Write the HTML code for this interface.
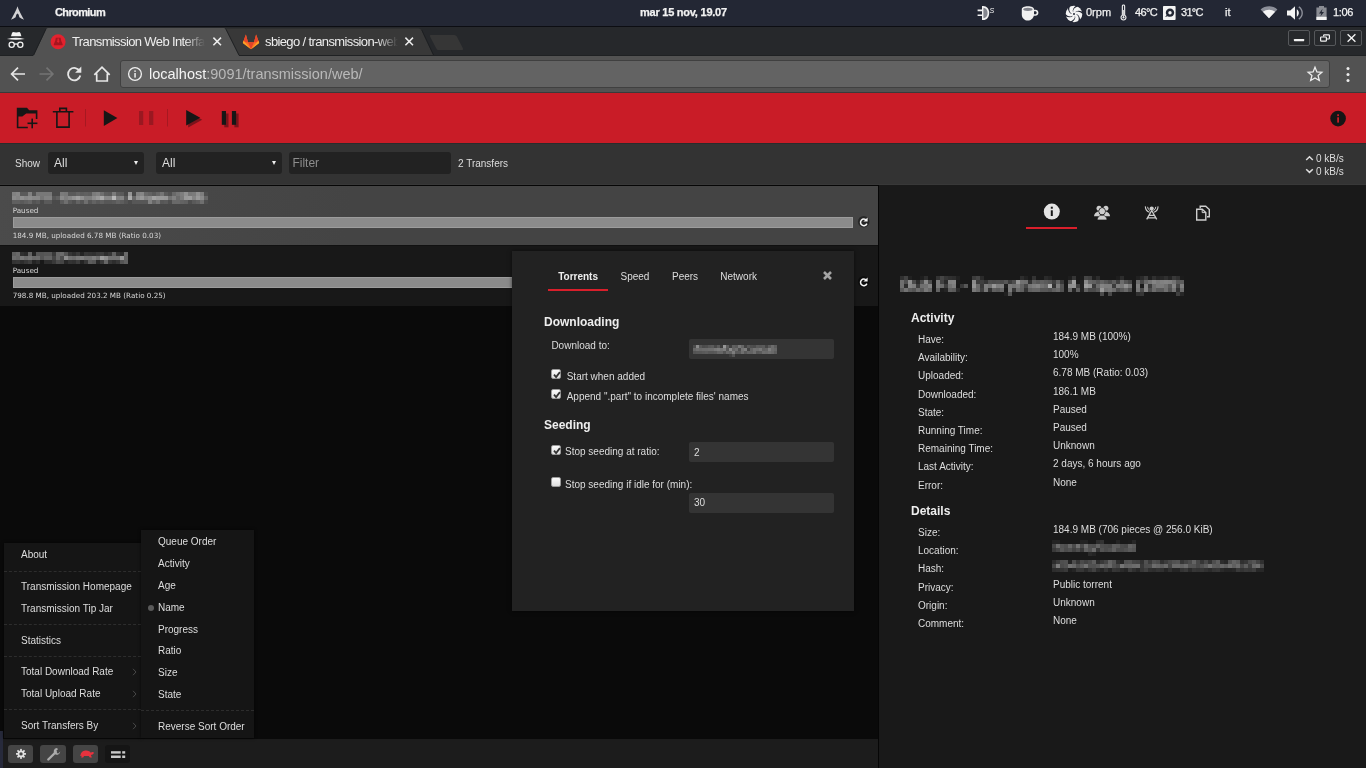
<!DOCTYPE html>
<html lang="it">
<head>
<meta charset="utf-8">
<title>Transmission Web Interface</title>
<style>
*{box-sizing:border-box;margin:0;padding:0}
html,body{width:1366px;height:768px;overflow:hidden;background:#0a0a0a}
body{position:relative;font-family:"Liberation Sans",Arial,sans-serif;font-size:10px;color:#ddd;line-height:1}
#wrap{position:absolute;left:0;top:0;width:1366px;height:768px;will-change:transform}
.abs{position:absolute}
svg{display:block;position:absolute;overflow:visible}
/* ---------- desktop panel ---------- */
#panel{position:absolute;left:0;top:0;width:1366px;height:27px;background:#232734;border-bottom:1px solid #0c0d12;color:#f2f2f2;font-size:11px}
#panel span{position:absolute;top:6px;white-space:pre;line-height:13px;-webkit-text-stroke:.25px #f2f2f2}
#panel .b{font-weight:bold}
/* ---------- chromium chrome ---------- */
#tabbar{position:absolute;left:0;top:27px;width:1366px;height:28px;background:#26282b}
#navbar{position:absolute;left:0;top:55px;width:1366px;height:38px;background:#525252;border-bottom:1px solid #3a3a3a}
.tabtitle{position:absolute;top:33.700px;font-size:13px;line-height:16px;color:#eee;white-space:pre;letter-spacing:-.62px;overflow:hidden}
#url{position:absolute;left:120px;top:60px;width:1210px;height:28px;background:#636363;border:1px solid #404040;border-radius:3px}
#urltext{position:absolute;left:149px;top:65px;font-size:14.5px;line-height:18px;color:#f4f4f4;white-space:pre}
#urltext i{font-style:normal;color:#b9b9b9}
.wbtn{position:absolute;top:30px;width:22px;height:16px;border:1px solid #56585b;border-radius:2px;background:#27292c}
.sel.noarr:after{display:none}
/* ---------- transmission ---------- */
#toolbar{position:absolute;left:0;top:93px;width:1366px;height:50px;background:#c91c27}
#statusbar{position:absolute;left:0;top:143px;width:1366px;height:42px;background:#333;box-shadow:inset 0 1px 0 #2b2b2b,inset 0 -1px 0 #383838}
#listtop{position:absolute;left:0;top:185px;width:879px;height:1px;background:#060606}
.sel{position:absolute;top:152px;height:22px;background:#222;border-radius:3px;color:#ddd;font-size:12px;line-height:22px;padding-left:6px}
.sel:after{content:"";position:absolute;right:6.200px;top:9px;border:2.400px solid transparent;border-top:4.600px solid #eee;border-bottom:0}
#list{position:absolute;left:0;top:186px;width:878px;height:552px;background:#0a0a0a}
.row{position:absolute;left:0;width:878px;height:60px}
.row .nm{position:absolute;left:13px;font-weight:bold;font-size:11px;line-height:12px;color:#ddd;white-space:pre}
.row .st{position:absolute;left:12.700px;font:7.2px/9px "DejaVu Sans",Verdana,sans-serif;color:#d8d8d8;white-space:pre}
.row .bar{position:absolute;left:13px;top:31px;width:840px;height:11px;background:#8b8b8b;border:1px solid #9c9c9c}
#inspector{position:absolute;left:878px;top:185px;width:488px;height:583px;background:#191919;border-left:1px solid #060606}
.ih{position:absolute;left:911px;font-weight:bold;font-size:12px;line-height:14px;color:#eee;white-space:pre}
.k,.v{position:absolute;font-size:10px;line-height:12px;color:#ddd;white-space:pre}
.k{left:918px}.v{left:1053px}
#footer{position:absolute;left:0;top:738px;width:878px;height:30px;background:#1c1c1c;border-top:1px solid #0a0a0a}
.fbtn{position:absolute;top:745px;width:25px;height:18px;border-radius:3px;background:#454545}
/* dialog */
#prefs{position:absolute;left:512px;top:251px;width:342px;height:360px;background:#222;box-shadow:0 0 4px rgba(0,0,0,.6)}
#prefs .t{position:absolute;font-size:10px;line-height:12px;color:#ddd;white-space:pre}
#prefs .h{position:absolute;left:32px;font-weight:bold;font-size:12px;line-height:14px;color:#eee}
#prefs .inp{position:absolute;left:177px;width:145px;height:20px;background:#343434;border-radius:2px;font-size:10px;line-height:20px;padding-left:5px;color:#ddd}
.cb{position:absolute;width:10px;height:10px;border-radius:2px;background:linear-gradient(#fbfbfb,#dedede);border:1px solid #9a9a9a}
/* menus */
.menu{position:absolute;background:#151515;box-shadow:0 0 3px rgba(0,0,0,.7)}
.menu .mi{position:absolute;font-size:10px;line-height:12px;color:#ddd;white-space:pre}
.menu .sep{position:absolute;left:0;right:0;height:0;border-top:1px dashed #2d2d2d}
</style>
</head>
<body>
<div id="wrap">
<!-- PANEL -->
<div id="panel">
<svg style="left:11px;top:6px" width="13" height="14" viewBox="0 0 13 14"><path d="M6.500 .2 C5.900 2.400 4.800 5 0 13.700 C2.200 12.700 3.600 12.200 4.700 11.300 C4.900 9.300 5.600 8.300 6.500 7.600 C7.400 8.300 8.100 9.300 8.300 11.300 C9.400 12.200 10.800 12.700 13 13.700 C8.200 5 7.100 2.400 6.500 .2Z" fill="#d2d2d4"/></svg>
<span class="b" style="left:55px;letter-spacing:-.62px">Chromium</span>
<span class="b" style="left:640px;letter-spacing:-.24px">mar 15 nov, 19.07</span>
<!-- plug -->
<svg style="left:977px;top:5px" width="18" height="16" viewBox="0 0 18 16"><path d="M.6 4.600h5v1.600h-5zM.6 9.500h5v1.600h-5z" fill="#f2f2f2"/><path d="M5 1h1.200c3.600 0 6 3 6 6.900s-2.400 7.100-6 7.100H5z" fill="#f2f2f2"/><path d="M6.400 2.700c2.500 .2 4.200 2.400 4.200 5.200s-1.700 5.200-4.200 5.400z" fill="#84868e"/><text x="12.600" y="8.300" font-size="7" font-style="italic" fill="#f2f2f2" font-family="Liberation Sans, sans-serif">S</text></svg>
<!-- cup -->
<svg style="left:1021px;top:6px" width="18" height="15" viewBox="0 0 18 15"><path d="M.8 3.200C.8 1.500 3.500 .3 6.900 .3s6.100 1.200 6.100 2.900v.5h1.500c1.700 0 2.900 1.300 2.900 3s-1.300 3-3 3h-1.600c-.5 2.600-2.900 4.800-5.900 4.800-3.400 0-6.100-2.700-6.100-6.100z M13 5.200v3h1.200c.9 0 1.500-.7 1.500-1.500s-.6-1.500-1.500-1.500z" fill="#f0f0f0" fill-rule="evenodd"/><ellipse cx="6.900" cy="3.300" rx="4.700" ry="1.600" fill="#232734" opacity=".55"/></svg>
<!-- fan -->
<svg style="left:1065px;top:4.500px" width="18" height="18" viewBox="-9 -9 18 18"><circle r="8.300" fill="#f4f4f4"/><g fill="#232734"><path d="M1.70 0.00 Q5.60 0.20 6.25 6.47 L4.23 7.95 Q5.96 1.71 1.70 0.00Z"/><path transform="rotate(60)" d="M1.70 0.00 Q5.60 0.20 6.25 6.47 L4.23 7.95 Q5.96 1.71 1.70 0.00Z"/><path transform="rotate(120)" d="M1.70 0.00 Q5.60 0.20 6.25 6.47 L4.23 7.95 Q5.96 1.71 1.70 0.00Z"/><path transform="rotate(180)" d="M1.70 0.00 Q5.60 0.20 6.25 6.47 L4.23 7.95 Q5.96 1.71 1.70 0.00Z"/><path transform="rotate(240)" d="M1.70 0.00 Q5.60 0.20 6.25 6.47 L4.23 7.95 Q5.96 1.71 1.70 0.00Z"/><path transform="rotate(300)" d="M1.70 0.00 Q5.60 0.20 6.25 6.47 L4.23 7.95 Q5.96 1.71 1.70 0.00Z"/></g><circle r="1" fill="#232734"/></svg>
<span style="left:1086px">0rpm</span>
<!-- thermo -->
<svg style="left:1120px;top:4px" width="7" height="17" viewBox="0 0 7 17"><path d="M3.500 .5c-1 0-1.700 .7-1.700 1.700v8.900c-.8 .5-1.300 1.400-1.300 2.400 0 1.700 1.300 3 3 3s3-1.300 3-3c0-1-.5-1.900-1.300-2.400V2.200c0-1-.7-1.700-1.700-1.700z M3.500 1.600c.4 0 .6 .3 .6 .6v9.500c.8 .3 1.300 1 1.300 1.800 0 1.100-.9 1.900-1.900 1.900s-1.900-.8-1.900-1.900c0-.8 .5-1.500 1.300-1.800V2.200c0-.3 .2-.6 .6-.6z" fill="#f0f0f0" fill-rule="evenodd"/><circle cx="3.500" cy="13.500" r="1.100" fill="#f0f0f0"/><rect x="3.100" y="6" width=".8" height="7" fill="#f0f0f0"/></svg>
<span style="left:1135px;letter-spacing:-.6px">46°C</span>
<!-- disk -->
<svg style="left:1163px;top:6px" width="13" height="14" viewBox="0 0 13 14"><path d="M1 0h10.600c.6 0 1 .4 1 1v12c0 .6-.4 1-1 1H1c-.6 0-1-.4-1-1V1c0-.6 .4-1 1-1z M7 2.600c-2.300 0-4.200 1.800-4.200 4.100 0 .9 .3 1.700 .8 2.400l-1.500 2 2.500-.9c.7 .4 1.500 .6 2.400 .6 2.300 0 4.200-1.800 4.200-4.100S9.300 2.600 7 2.600z" fill="#f4f4f4" fill-rule="evenodd"/><circle cx="7" cy="6.700" r="1.700" fill="#f4f4f4"/></svg>
<span style="left:1181px;letter-spacing:-.7px">31°C</span>
<span style="left:1225px">it</span>
<!-- wifi -->
<svg style="left:1260px;top:6px" width="18" height="13" viewBox="0 0 18 13"><path d="M9 12.300L.6 3.400C5.200 -.8 12.800 -.8 17.400 3.400z" fill="#8c8f99"/><path d="M9 12.300L2.900 5.800C6.300 2.900 11.700 2.900 15.100 5.800z" fill="#f4f4f4"/></svg>
<!-- volume -->
<svg style="left:1287px;top:6px" width="17" height="14" viewBox="0 0 17 14"><path d="M0 4.500h3.300L8 .3v13.400L3.300 9.500H0z" fill="#f4f4f4"/><path d="M9.800 3.300c1.300 .9 2 2.200 2 3.700s-.7 2.800-2 3.700z" fill="#f4f4f4"/><path d="M11.800 .9c2.100 1.400 3.400 3.600 3.400 6.100s-1.300 4.700-3.400 6.100" fill="none" stroke="#8c8f99" stroke-width="1.400"/></svg>
<!-- battery -->
<svg style="left:1316px;top:6px" width="11" height="14" viewBox="0 0 11 14"><path d="M3 0h5v1.400h2.600V14H.4V1.400H3z" fill="#8a8c93"/><rect x=".4" y="10.800" width="10.200" height="3.200" fill="#f4f4f4"/><path d="M6.600 2.800L3 7.400h2.300L4.400 10.600 8 6H5.700z" fill="#232734"/></svg>
<span style="left:1333px;letter-spacing:-.35px">1:06</span>
</div>
<!-- TABBAR -->
<div id="tabbar"></div>
<div id="navbar"></div><div class="abs" style="left:0;top:54.500px;width:33px;height:1px;background:#1f2123"></div><div class="abs" style="left:239px;top:54.500px;width:1127px;height:1px;background:#1f2123"></div>
<svg style="left:0;top:27px" width="480" height="29" viewBox="0 0 480 29">
<!-- inactive tab -->
<path d="M226 1.500 H418.500 Q420.500 1.500 421.500 3.500 L433 28 H214z" fill="#383838"/>
<!-- new tab button -->
<path d="M430.500 8 H454.500 Q456 8 456.800 9.500 L463 21.500 Q463.600 23 462 23 H438.500 Q437 23 436.300 21.500 L430 9.500 Q429.400 8 430.500 8z" fill="#363636"/>
<!-- active tab -->
<path d="M33.800 28.500 L46.200 2.200 Q46.800 1 48.200 1 H223.600 Q225 1 225.600 2.200 L238.800 28.500z" fill="#525252"/>
<path d="M33.400 28.500 L45.800 2.200 M226 2.200 L239.200 28.500 M421.800 3 L433.600 28" stroke="#1c1e20" stroke-width=".9" fill="none"/>
<!-- incognito -->
<g fill="#f2f2f2"><path d="M12 6 L12.900 4.900 L16.200 5.500 L19.500 4.900 L20.400 6 L21.400 9.300 H11z"/><path d="M6.900 11.900 Q16 9.700 24.800 11.900 Q16 13.400 6.900 11.900z"/></g>
<g fill="none" stroke="#f2f2f2" stroke-width="1.300"><circle cx="11.700" cy="17.800" r="2.600"/><circle cx="20.300" cy="17.800" r="2.600"/><path d="M14.300 17.500 Q16 16.300 17.700 17.500"/></g>
<!-- transmission favicon -->
<circle cx="58.100" cy="14.800" r="7.500" fill="#e3222e"/>
<path d="M55.800 10.800h4.800l.5 2.700 1.500 3.800c.2 .6-.1 1-.7 1h-7.400c-.6 0-.9-.4-.7-1l1.500-3.800z" fill="#a5151f"/>
<path d="M57.500 11.500h1.400v2.200h1l-1.700 2.200-1.700-2.200h1z" fill="#e3222e"/>
<!-- tab close x -->
<path d="M213.400 10.600 L221 18.200 M221 10.600 L213.400 18.200" stroke="#ececec" stroke-width="1.500" fill="none"/>
<path d="M405.400 10.600 L413 18.200 M413 10.600 L405.400 18.200" stroke="#ececec" stroke-width="1.500" fill="none"/>
<!-- gitlab fox -->
<path d="M251 22.300 L242.800 15.900 L245.900 7.600 L248 15.300 H254 L256.100 7.600 L259.200 15.900z" fill="#fc6d26"/>
<path d="M251 22.300 L248 15.300 H254z" fill="#e24329"/>
<path d="M244.300 11.800 L245.900 7.600 L248 15.300 H243.400z M257.700 11.800 L256.100 7.600 L254 15.300 H258.600z" fill="#e8452a"/>
<path d="M251 22.300 L242.800 15.900 L243.600 13.600z M251 22.300 L259.200 15.900 L258.400 13.600z" fill="#fca326"/>
</svg>
<div class="tabtitle" style="left:72px;width:133px;-webkit-mask-image:linear-gradient(90deg,#000 112px,transparent 133px);mask-image:linear-gradient(90deg,#000 112px,transparent 133px)">Transmission Web Interface</div>
<div class="tabtitle" style="left:265px;width:133px;-webkit-mask-image:linear-gradient(90deg,#000 112px,transparent 133px);mask-image:linear-gradient(90deg,#000 112px,transparent 133px)">sbiego / transmission-web</div>
<!-- window buttons -->
<div class="wbtn" style="left:1288px"></div><div class="wbtn" style="left:1314px"></div><div class="wbtn" style="left:1340px"></div>
<svg style="left:1288px;top:30px" width="76" height="17" viewBox="0 0 76 17">
<rect x="5.900" y="8.900" width="10.300" height="2.300" rx=".6" fill="#f2f2f2"/>
<g fill="none" stroke="#f2f2f2" stroke-width="1.200"><rect x="32.600" y="7" width="5.800" height="4.200" rx=".8"/><path d="M35.600 6.600V5.600q0-.8 .8-.8h4.200q.8 0 .8 .8v2.600q0 .8-.8 .8h-1.800"/></g>
<path d="M59.600 4.300 L67.400 11.800 M67.400 4.300 L59.600 11.800" stroke="#f2f2f2" stroke-width="1.400" fill="none"/>
</svg>
<!-- nav icons -->
<svg style="left:0;top:55px" width="121" height="38" viewBox="0 0 121 38">
<g fill="none" stroke="#e6e6e6" stroke-width="1.700"><path d="M25 19H12.500 M18 12.600 L11.600 19 L18 25.400"/></g>
<g fill="none" stroke="#747474" stroke-width="1.700"><path d="M39.500 19H52 M46.500 12.600 L52.900 19 L46.500 25.400"/></g>
<g fill="none" stroke="#e6e6e6" stroke-width="1.800"><path d="M79.800 16.400 A6.200 6.200 0 1 0 80.300 20.500"/></g>
<path d="M81.300 11.600v6.200h-6.200z" fill="#e6e6e6"/>
<g fill="none" stroke="#e6e6e6" stroke-width="1.700"><path d="M94.300 19.800 L102 12.200 L109.700 19.800 M96.700 18.500V26h10.600V18.500"/></g>
</svg>
<div id="url"></div>
<svg style="left:127px;top:66px" width="16" height="16" viewBox="0 0 16 16"><circle cx="8" cy="8" r="6.400" fill="none" stroke="#f0f0f0" stroke-width="1.300"/><rect x="7.300" y="7" width="1.500" height="4.600" fill="#f0f0f0"/><rect x="7.300" y="4.400" width="1.500" height="1.500" fill="#f0f0f0"/></svg>
<div id="urltext">localhost<i>:9091/transmission/web/</i></div>
<svg style="left:1306px;top:65px" width="18" height="18" viewBox="0 0 18 18"><path d="M9 2.300 L10.900 6.900 L15.900 7.300 L12.100 10.600 L13.300 15.500 L9 12.900 L4.700 15.500 L5.900 10.600 L2.100 7.300 L7.100 6.900z" fill="none" stroke="#ededed" stroke-width="1.300" stroke-linejoin="miter"/></svg>
<svg style="left:1346px;top:66px" width="4" height="17" viewBox="0 0 4 17"><circle cx="2" cy="2.400" r="1.500" fill="#ededed"/><circle cx="2" cy="8.400" r="1.500" fill="#ededed"/><circle cx="2" cy="14.400" r="1.500" fill="#ededed"/></svg>
<!-- APP -->
<div id="toolbar"></div>
<svg style="left:0;top:93px" width="1366" height="50" viewBox="0 0 1366 50">
<!-- open folder+ -->
<g fill="#161616">
<path d="M16.800 14.700 H27 L29.200 17.300 H37.400 V26 H35.800 V20.400 H26.200 L22.300 23.400 H18.400 V33.700 H27.800 V35.300 H16.800z"/>
<rect x="27.500" y="29.500" width="9.900" height="1.600"/><rect x="31.400" y="25.600" width="1.600" height="9.700"/>
</g>
<!-- trash -->
<g fill="none" stroke="#161616" stroke-width="1.600"><path d="M52.800 18.800H73.400 M59.800 18.800V15.400H66.400V18.800 M56.900 18.800V34.100H69.100V18.800"/></g>
<rect x="85" y="16" width="1" height="17.500" fill="#a61821"/>
<path d="M103.800 17.300 L117.400 25.100 L103.800 32.900z" fill="#161616"/>
<rect x="139" y="18" width="4.200" height="14" fill="#9a1821"/><rect x="149.100" y="18" width="4.200" height="14" fill="#9a1821"/>
<rect x="167" y="16" width="1" height="17.500" fill="#a61821"/>
<path d="M188.200 19 L202.200 26.800 L188.200 34.500z" fill="#7a131b"/>
<path d="M186.200 16.900 L200.200 24.700 L186.200 32.400z" fill="#161616"/>
<rect x="224.300" y="20.500" width="4.200" height="13.800" fill="#7a131b"/><rect x="234.400" y="20.500" width="4.200" height="13.800" fill="#7a131b"/>
<rect x="221.800" y="18" width="4.200" height="13.800" fill="#161616"/><rect x="231.900" y="18" width="4.200" height="13.800" fill="#161616"/>
<!-- info -->
<circle cx="1338.100" cy="25.600" r="7.800" fill="#151515"/>
<rect x="1337.200" y="24.300" width="1.800" height="5.300" fill="#c91c27"/><rect x="1337.200" y="21.300" width="1.800" height="1.800" fill="#c91c27"/>
</svg>
<div id="statusbar"></div><div id="listtop"></div>
<div class="abs" style="left:15px;top:158px;font-size:10px;line-height:12px;color:#ddd">Show</div>
<div class="sel" style="left:48px;width:96px">All</div>
<div class="sel" style="left:156px;width:126px">All</div>
<div class="sel noarr" style="left:289px;width:162px;padding-left:3.400px;color:#8d8d8d">Filter</div>
<div class="abs" style="left:458px;top:158px;font-size:10px;line-height:12px;color:#ddd">2 Transfers</div>
<svg style="left:1305px;top:154px" width="9" height="22" viewBox="0 0 9 22"><g fill="none" stroke="#ddd" stroke-width="1.500"><path d="M1.200 6 L4.500 2.800 L7.800 6"/><path d="M1.200 15.200 L4.500 18.400 L7.800 15.200"/></g></svg>
<div class="abs" style="left:1316px;top:153px;font-size:10px;line-height:12px;color:#ddd">0 kB/s</div>
<div class="abs" style="left:1316px;top:166px;font-size:10px;line-height:12px;color:#ddd">0 kB/s</div>
<!-- LIST -->
<div id="list">
<div class="row" style="top:0;height:59px;background:linear-gradient(100deg,#4b4b4b,#444 40%,#444)">

<div class="st" style="top:20px">Paused</div><div class="bar"></div>
<div class="st" style="top:45px">184.9 MB, uploaded 6.78 MB (Ratio 0.03)</div>
</div>
<div class="row" style="top:59px;height:61px;background:#181818;box-shadow:inset 0 1px 0 #111">

<div class="st" style="top:21px">Paused</div><div class="bar" style="top:32px"></div>
<div class="st" style="top:46px">798.8 MB, uploaded 203.2 MB (Ratio 0.25)</div>
</div>
</div>
<svg style="left:856px;top:214px" width="16" height="76" viewBox="0 0 16 76">
<g><circle cx="7.700" cy="7.700" r="5.800" fill="#000" fill-opacity=".42"/><path d="M10.400 6.300 A3.300 3.300 0 1 0 10.900 9.600" fill="none" stroke="#f4f4f4" stroke-width="1.500"/><path d="M11.600 3.400v4.200H7.400z" fill="#f4f4f4"/></g>
<g transform="translate(0 60)"><circle cx="7.700" cy="7.700" r="5.800" fill="#000" fill-opacity=".42"/><path d="M10.400 6.300 A3.300 3.300 0 1 0 10.900 9.600" fill="none" stroke="#f4f4f4" stroke-width="1.500"/><path d="M11.600 3.400v4.200H7.400z" fill="#f4f4f4"/></g>
</svg>
<!-- INSPECTOR -->
<div id="inspector"></div>
<div class="abs" style="left:1026px;top:227px;width:51px;height:2px;background:#d91f2b"></div>
<svg style="left:1026px;top:200px" width="204" height="26" viewBox="0 0 204 26">
<circle cx="25.800" cy="11.600" r="8" fill="#e4e4e4"/><rect x="24.800" y="10.300" width="2" height="5.700" fill="#191919"/><rect x="24.800" y="6.700" width="2" height="2" fill="#191919"/>
<!-- peers -->
<g fill="#cdcdcd"><circle cx="73" cy="8.200" r="2.500"/><circle cx="79.900" cy="8.200" r="2.500"/>
<path d="M68 16.300c.2-2.600 2-4.300 5-5.300l1.500 5.300z M84.100 16.300c-.2-2.600-2-4.300-5-5.300l-1.500 5.300z"/>
<ellipse cx="76.100" cy="11.300" rx="3.200" ry="3.500" stroke="#191919" stroke-width="1"/>
<path d="M71.300 19.900c0-2.400 1.300-3.600 3.300-4.600h3c2 1 3.300 2.200 3.300 4.600z" stroke="#191919" stroke-width=".6"/>
<ellipse cx="76.100" cy="11.300" rx="2.700" ry="3"/></g>
<!-- tracker -->
<g fill="none" stroke="#cdcdcd" stroke-width="1.300"><path d="M125.700 10.500 L120.700 19.400 M125.700 10.500 L130.700 19.400 M122.900 15.300 H128.500 M121.800 17.800 H129.600"/>
<path d="M119.300 6.400 Q119.600 11.200 123.600 12.300" stroke-width="1.100"/><path d="M132.100 6.400 Q131.800 11.200 127.800 12.300" stroke-width="1.100"/>
<path d="M121.600 6.800 Q121.800 9.600 124 10.600" stroke-width="1"/><path d="M129.800 6.800 Q129.600 9.600 127.400 10.600" stroke-width="1"/></g><circle cx="125.700" cy="8.600" r="2.100" fill="#cdcdcd"/>
<!-- files -->
<g fill="none" stroke="#cdcdcd" stroke-width="1.400"><path d="M174.200 8.300 V6.200 H179.700 L183.300 9.600 V16.800 H181"/><path d="M170.700 9.200 H176.200 L179.800 12.600 V20 H170.700z"/><path d="M176.200 9.200 V12.600 H179.800" stroke-width="1"/></g>
</svg>

<div class="ih" style="top:310.94px">Activity</div>
<div class="k" style="top:334px">Have:</div><div class="v" style="top:331px">184.9 MB (100%)</div>
<div class="k" style="top:352px">Availability:</div><div class="v" style="top:349px">100%</div>
<div class="k" style="top:370px">Uploaded:</div><div class="v" style="top:367px">6.78 MB (Ratio: 0.03)</div>
<div class="k" style="top:389px">Downloaded:</div><div class="v" style="top:386px">186.1 MB</div>
<div class="k" style="top:407px">State:</div><div class="v" style="top:404px">Paused</div>
<div class="k" style="top:425px">Running Time:</div><div class="v" style="top:422px">Paused</div>
<div class="k" style="top:443px">Remaining Time:</div><div class="v" style="top:440px">Unknown</div>
<div class="k" style="top:461px">Last Activity:</div><div class="v" style="top:458px">2 days, 6 hours ago</div>
<div class="k" style="top:480px">Error:</div><div class="v" style="top:477px">None</div>
<div class="ih" style="top:503.64px">Details</div>
<div class="k" style="top:527px">Size:</div><div class="v" style="top:524px">184.9 MB (706 pieces @ 256.0 KiB)</div>
<div class="k" style="top:545px">Location:</div><div class="v" style="top:542px"></div>
<div class="k" style="top:563px">Hash:</div><div class="v" style="top:560px"></div>
<div class="k" style="top:582px">Privacy:</div><div class="v" style="top:579px">Public torrent</div>
<div class="k" style="top:600px">Origin:</div><div class="v" style="top:597px">Unknown</div>
<div class="k" style="top:618px">Comment:</div><div class="v" style="top:615px">None</div>
<div id="footer"></div>
<div class="abs" style="left:0;top:731px;width:2.500px;height:37px;background:#272a3b"></div>
<div class="fbtn" style="left:8px"></div><div class="fbtn" style="left:40px;width:26px"></div><div class="fbtn" style="left:73px"></div><div class="fbtn" style="left:105px;background:#151515"></div>
<svg style="left:8px;top:745px" width="124" height="18" viewBox="0 0 124 18">
<!-- gear -->
<g transform="translate(13 8.900)"><g fill="#e2e2e2"><rect x="-.85" y="-5" width="1.700" height="10"/><rect transform="rotate(45)" x="-.85" y="-5" width="1.700" height="10"/><rect transform="rotate(90)" x="-.85" y="-5" width="1.700" height="10"/><rect transform="rotate(135)" x="-.85" y="-5" width="1.700" height="10"/><circle r="3.400"/></g><circle r="1.700" fill="#454545"/></g>
<!-- wrench -->
<g transform="translate(45.700 9.200)"><path d="M-5.400 5.300 L2.200 -2.200" stroke="#ababab" stroke-width="2.400" stroke-linecap="round" fill="none"/><path d="M2.800 -6.100 A3.500 3.500 0 0 0 1 -.2 A3.500 3.500 0 0 0 6.600 -2.600 L4.600 -.7 L2.800 -1.300 L2.400 -3.100 L4.400 -5.100 A3.500 3.500 0 0 0 2.800 -6.100z" fill="#ababab"/></g>
<!-- turtle -->
<g transform="translate(77.500 9.200)" fill="#e8323e"><path d="M-5 1 C-4.600 -2.400 -1.800 -3.600 .6 -3.600 C3 -3.600 4.600 -2.600 5.200 -1.400 C6 -2.200 7.600 -2.600 8.200 -1.800 C8.600 -1.100 8 -.2 7 .2 L5.400 .9 L6.400 3.400 H4.400 L3.200 1.800 H-1.400 L-2.400 3.400 H-4.400 L-3.800 1.600 L-5.600 1.800z"/></g>
<!-- compact -->
<g fill="#c8c8c8"><rect x="103" y="6.200" width="9.700" height="2.400"/><rect x="103" y="10.500" width="9.700" height="2.500"/><rect x="114.200" y="6.200" width="3" height="2.400"/><rect x="114.200" y="10.500" width="3" height="2.500"/></g>
</svg>
<svg style="left:12px;top:192px" width="196" height="12" viewBox="0 0 196 12" shape-rendering="crispEdges"><path fill="#4b4b4b" d="M116 8h4v4h-4z"/><path fill="#4e4e4e" d="M192 0h4v4h-4zM156 8h4v4h-4zM176 8h4v4h-4zM192 8h4v4h-4z"/><path fill="#515151" d="M156 0h4v4h-4zM60 8h4v4h-4z"/><path fill="#545454" d="M20 0h4v4h-4zM20 8h4v4h-4zM112 8h4v4h-4z"/><path fill="#575757" d="M40 4h4v4h-4zM68 8h4v4h-4zM76 8h4v4h-4zM92 8h4v4h-4zM96 8h4v4h-4zM120 8h4v4h-4zM124 8h4v4h-4zM128 8h4v4h-4zM132 8h4v4h-4zM148 8h4v4h-4z"/><path fill="#5a5a5a" d="M8 0h4v4h-4zM12 0h4v4h-4zM56 0h4v4h-4zM60 0h4v4h-4zM96 0h4v4h-4zM108 0h4v4h-4zM140 0h4v4h-4zM152 0h4v4h-4zM112 4h4v4h-4zM8 8h4v4h-4zM24 8h4v4h-4zM32 8h4v4h-4zM36 8h4v4h-4zM56 8h4v4h-4zM84 8h4v4h-4zM100 8h4v4h-4zM152 8h4v4h-4zM180 8h4v4h-4z"/><path fill="#5d5d5d" d="M68 0h4v4h-4zM76 0h4v4h-4zM92 0h4v4h-4zM104 0h4v4h-4zM48 8h4v4h-4zM108 8h4v4h-4z"/><path fill="#606060" d="M72 0h4v4h-4zM44 4h4v4h-4zM0 8h4v4h-4zM4 8h4v4h-4zM12 8h4v4h-4zM88 8h4v4h-4zM172 8h4v4h-4zM184 8h4v4h-4z"/><path fill="#636363" d="M64 0h4v4h-4zM136 0h4v4h-4zM64 8h4v4h-4zM80 8h4v4h-4zM104 8h4v4h-4zM168 8h4v4h-4z"/><path fill="#666666" d="M144 0h4v4h-4zM192 4h4v4h-4zM16 8h4v4h-4zM140 8h4v4h-4z"/><path fill="#696969" d="M132 0h4v4h-4zM160 0h4v4h-4zM120 4h4v4h-4zM160 8h4v4h-4zM164 8h4v4h-4z"/><path fill="#6c6c6c" d="M164 4h4v4h-4z"/><path fill="#6f6f6f" d="M88 0h4v4h-4zM52 8h4v4h-4zM72 8h4v4h-4zM188 8h4v4h-4z"/><path fill="#727272" d="M156 4h4v4h-4z"/><path fill="#757575" d="M148 0h4v4h-4zM164 0h4v4h-4zM28 4h4v4h-4zM144 8h4v4h-4z"/><path fill="#787878" d="M24 0h4v4h-4zM28 0h4v4h-4zM32 0h4v4h-4zM36 0h4v4h-4zM52 0h4v4h-4zM176 0h4v4h-4z"/><path fill="#7b7b7b" d="M48 0h4v4h-4zM80 0h4v4h-4zM100 0h4v4h-4zM180 0h4v4h-4zM168 4h4v4h-4z"/><path fill="#7e7e7e" d="M168 0h4v4h-4zM188 0h4v4h-4zM52 4h4v4h-4zM72 4h4v4h-4zM76 4h4v4h-4zM104 4h4v4h-4z"/><path fill="#818181" d="M0 0h4v4h-4zM16 0h4v4h-4zM84 0h4v4h-4zM124 0h4v4h-4zM32 4h4v4h-4zM36 4h4v4h-4zM160 4h4v4h-4zM136 8h4v4h-4z"/><path fill="#848484" d="M4 4h4v4h-4zM108 4h4v4h-4zM132 4h4v4h-4zM180 4h4v4h-4z"/><path fill="#878787" d="M4 0h4v4h-4zM128 0h4v4h-4zM12 4h4v4h-4zM20 4h4v4h-4zM24 4h4v4h-4zM56 4h4v4h-4zM92 4h4v4h-4zM96 4h4v4h-4z"/><path fill="#8a8a8a" d="M0 4h4v4h-4zM48 4h4v4h-4zM188 4h4v4h-4z"/><path fill="#8d8d8d" d="M16 4h4v4h-4zM80 4h4v4h-4zM136 4h4v4h-4z"/><path fill="#909090" d="M172 0h4v4h-4zM184 0h4v4h-4zM8 4h4v4h-4zM68 4h4v4h-4zM124 4h4v4h-4z"/><path fill="#939393" d="M60 4h4v4h-4z"/><path fill="#969696" d="M116 0h4v4h-4zM152 4h4v4h-4z"/><path fill="#999999" d="M84 4h4v4h-4zM128 4h4v4h-4zM144 4h4v4h-4zM148 4h4v4h-4zM172 4h4v4h-4zM184 4h4v4h-4z"/><path fill="#9c9c9c" d="M176 4h4v4h-4z"/><path fill="#9f9f9f" d="M64 4h4v4h-4z"/><path fill="#a2a2a2" d="M140 4h4v4h-4z"/><path fill="#a8a8a8" d="M88 4h4v4h-4z"/><path fill="#ababab" d="M116 4h4v4h-4z"/><path fill="#b7b7b7" d="M100 4h4v4h-4z"/></svg>
<svg style="left:12px;top:252px" width="116" height="12" viewBox="0 0 116 12" shape-rendering="crispEdges"><path fill="#242424" d="M20 0h4v4h-4zM68 0h4v4h-4zM20 8h4v4h-4zM68 8h4v4h-4z"/><path fill="#272727" d="M52 8h4v4h-4z"/><path fill="#2a2a2a" d="M12 0h4v4h-4zM108 0h4v4h-4zM84 8h4v4h-4z"/><path fill="#2d2d2d" d="M60 0h4v4h-4zM92 0h4v4h-4zM8 8h4v4h-4zM24 8h4v4h-4zM32 8h4v4h-4zM36 8h4v4h-4zM100 8h4v4h-4z"/><path fill="#303030" d="M8 0h4v4h-4zM80 0h4v4h-4zM60 8h4v4h-4z"/><path fill="#333333" d="M76 0h4v4h-4zM104 0h4v4h-4zM0 8h4v4h-4zM56 8h4v4h-4z"/><path fill="#363636" d="M56 0h4v4h-4zM72 0h4v4h-4zM96 0h4v4h-4zM4 8h4v4h-4zM12 8h4v4h-4zM72 8h4v4h-4zM96 8h4v4h-4zM104 8h4v4h-4z"/><path fill="#393939" d="M40 0h4v4h-4zM64 0h4v4h-4zM84 0h4v4h-4zM40 8h4v4h-4z"/><path fill="#3c3c3c" d="M88 0h4v4h-4zM64 8h4v4h-4zM88 8h4v4h-4z"/><path fill="#3f3f3f" d="M16 8h4v4h-4z"/><path fill="#454545" d="M40 4h4v4h-4zM48 8h4v4h-4z"/><path fill="#4b4b4b" d="M44 8h4v4h-4z"/><path fill="#4e4e4e" d="M48 4h4v4h-4z"/><path fill="#545454" d="M28 0h4v4h-4zM52 0h4v4h-4zM28 4h4v4h-4zM108 8h4v4h-4z"/><path fill="#575757" d="M24 0h4v4h-4zM32 0h4v4h-4zM36 0h4v4h-4zM80 8h4v4h-4z"/><path fill="#5d5d5d" d="M76 8h4v4h-4z"/><path fill="#606060" d="M0 0h4v4h-4zM100 0h4v4h-4zM112 8h4v4h-4z"/><path fill="#636363" d="M16 0h4v4h-4zM32 4h4v4h-4zM36 4h4v4h-4zM112 4h4v4h-4z"/><path fill="#666666" d="M44 0h4v4h-4zM4 4h4v4h-4zM44 4h4v4h-4zM92 8h4v4h-4z"/><path fill="#696969" d="M4 0h4v4h-4zM112 0h4v4h-4zM20 4h4v4h-4z"/><path fill="#6c6c6c" d="M48 0h4v4h-4zM0 4h4v4h-4zM12 4h4v4h-4zM24 4h4v4h-4zM60 4h4v4h-4z"/><path fill="#6f6f6f" d="M84 4h4v4h-4z"/><path fill="#727272" d="M56 4h4v4h-4zM72 4h4v4h-4zM76 4h4v4h-4zM96 4h4v4h-4zM100 4h4v4h-4zM104 4h4v4h-4z"/><path fill="#757575" d="M16 4h4v4h-4z"/><path fill="#787878" d="M8 4h4v4h-4zM64 4h4v4h-4z"/><path fill="#7e7e7e" d="M68 4h4v4h-4zM80 4h4v4h-4z"/><path fill="#8d8d8d" d="M52 4h4v4h-4zM92 4h4v4h-4z"/><path fill="#969696" d="M108 4h4v4h-4z"/><path fill="#9c9c9c" d="M88 4h4v4h-4z"/></svg>
<svg style="left:900px;top:276px" width="284" height="24" viewBox="0 0 284 24" shape-rendering="crispEdges"><path fill="#1b1b1b" d="M180 0h4v4h-4zM280 0h4v4h-4zM56 4h4v4h-4zM240 8h4v4h-4zM164 12h4v4h-4zM212 16h4v4h-4z"/><path fill="#1e1e1e" d="M20 0h4v4h-4zM168 0h4v4h-4zM192 0h4v4h-4zM216 0h4v4h-4zM248 0h4v4h-4zM40 12h4v4h-4z"/><path fill="#212121" d="M8 0h4v4h-4zM56 0h4v4h-4zM124 0h4v4h-4zM236 0h4v4h-4zM180 4h4v4h-4zM104 8h4v4h-4zM180 8h4v4h-4zM180 12h4v4h-4zM104 16h4v4h-4z"/><path fill="#242424" d="M148 0h4v4h-4zM256 0h4v4h-4zM268 0h4v4h-4zM44 12h4v4h-4zM172 12h4v4h-4z"/><path fill="#272727" d="M260 0h4v4h-4zM280 16h4v4h-4z"/><path fill="#2a2a2a" d="M80 0h4v4h-4zM144 0h4v4h-4zM240 0h4v4h-4zM16 4h4v4h-4zM44 4h4v4h-4zM56 12h4v4h-4z"/><path fill="#2d2d2d" d="M24 0h4v4h-4zM52 0h4v4h-4zM120 0h4v4h-4zM196 0h4v4h-4zM220 0h4v4h-4zM4 8h4v4h-4z"/><path fill="#303030" d="M0 0h4v4h-4zM48 0h4v4h-4zM252 0h4v4h-4zM264 0h4v4h-4zM276 0h4v4h-4zM276 12h4v4h-4zM236 16h4v4h-4z"/><path fill="#333333" d="M36 0h4v4h-4zM132 0h4v4h-4zM84 4h4v4h-4zM128 4h4v4h-4zM152 8h4v4h-4zM88 12h4v4h-4zM124 12h4v4h-4z"/><path fill="#363636" d="M44 0h4v4h-4zM172 0h4v4h-4zM112 12h4v4h-4zM240 16h4v4h-4z"/><path fill="#393939" d="M272 0h4v4h-4zM160 4h4v4h-4zM60 8h4v4h-4zM80 8h4v4h-4z"/><path fill="#3c3c3c" d="M72 0h4v4h-4zM244 0h4v4h-4zM76 4h4v4h-4zM108 4h4v4h-4zM16 8h4v4h-4zM192 8h4v4h-4zM212 8h4v4h-4zM248 8h4v4h-4z"/><path fill="#3f3f3f" d="M188 0h4v4h-4zM80 4h4v4h-4zM152 4h4v4h-4zM216 4h4v4h-4zM44 8h4v4h-4zM176 8h4v4h-4zM80 12h4v4h-4zM276 16h4v4h-4z"/><path fill="#424242" d="M4 0h4v4h-4zM40 4h4v4h-4z"/><path fill="#454545" d="M40 0h4v4h-4zM76 0h4v4h-4zM184 0h4v4h-4zM228 4h4v4h-4zM240 4h4v4h-4zM276 8h4v4h-4z"/><path fill="#484848" d="M124 8h4v4h-4zM208 16h4v4h-4z"/><path fill="#4b4b4b" d="M12 4h4v4h-4zM92 4h4v4h-4zM100 4h4v4h-4zM208 4h4v4h-4zM188 12h4v4h-4zM192 12h4v4h-4zM216 12h4v4h-4zM240 12h4v4h-4zM200 16h4v4h-4z"/><path fill="#4e4e4e" d="M20 4h4v4h-4zM28 4h4v4h-4zM88 4h4v4h-4zM96 4h4v4h-4zM112 4h4v4h-4zM248 12h4v4h-4z"/><path fill="#515151" d="M4 4h4v4h-4zM148 12h4v4h-4zM160 12h4v4h-4zM228 12h4v4h-4zM268 12h4v4h-4z"/><path fill="#545454" d="M148 4h4v4h-4zM168 4h4v4h-4zM196 4h4v4h-4zM224 4h4v4h-4zM160 8h4v4h-4zM12 12h4v4h-4z"/><path fill="#575757" d="M104 4h4v4h-4zM136 4h4v4h-4zM204 4h4v4h-4zM276 4h4v4h-4zM64 8h4v4h-4zM140 12h4v4h-4zM144 12h4v4h-4zM196 12h4v4h-4zM108 16h4v4h-4z"/><path fill="#5a5a5a" d="M144 4h4v4h-4zM268 8h4v4h-4zM0 12h4v4h-4zM20 12h4v4h-4zM52 12h4v4h-4zM96 12h4v4h-4zM220 12h4v4h-4zM256 12h4v4h-4zM260 12h4v4h-4z"/><path fill="#5d5d5d" d="M212 4h4v4h-4zM280 4h4v4h-4zM8 12h4v4h-4zM176 12h4v4h-4z"/><path fill="#606060" d="M132 4h4v4h-4zM140 4h4v4h-4zM156 4h4v4h-4zM192 4h4v4h-4zM48 12h4v4h-4zM92 12h4v4h-4zM120 12h4v4h-4zM128 12h4v4h-4zM152 12h4v4h-4z"/><path fill="#636363" d="M200 4h4v4h-4zM120 8h4v4h-4zM36 12h4v4h-4zM184 12h4v4h-4z"/><path fill="#666666" d="M188 4h4v4h-4zM244 4h4v4h-4zM100 12h4v4h-4zM132 12h4v4h-4zM136 12h4v4h-4zM168 12h4v4h-4z"/><path fill="#696969" d="M76 8h4v4h-4zM144 8h4v4h-4zM28 12h4v4h-4zM76 12h4v4h-4zM156 12h4v4h-4zM224 12h4v4h-4z"/><path fill="#6c6c6c" d="M220 4h4v4h-4zM236 4h4v4h-4zM40 8h4v4h-4zM196 8h4v4h-4zM16 12h4v4h-4zM116 12h4v4h-4zM212 12h4v4h-4zM252 12h4v4h-4zM280 12h4v4h-4z"/><path fill="#6f6f6f" d="M0 4h4v4h-4zM124 4h4v4h-4zM0 8h4v4h-4zM20 8h4v4h-4zM252 8h4v4h-4zM264 12h4v4h-4z"/><path fill="#727272" d="M120 4h4v4h-4zM24 8h4v4h-4zM48 8h4v4h-4zM88 8h4v4h-4zM112 8h4v4h-4zM140 8h4v4h-4zM264 8h4v4h-4zM4 12h4v4h-4zM204 12h4v4h-4z"/><path fill="#757575" d="M248 4h4v4h-4zM272 4h4v4h-4zM128 8h4v4h-4zM272 12h4v4h-4z"/><path fill="#787878" d="M220 8h4v4h-4zM228 8h4v4h-4zM24 12h4v4h-4zM72 12h4v4h-4zM84 12h4v4h-4zM208 12h4v4h-4zM236 12h4v4h-4z"/><path fill="#7b7b7b" d="M36 4h4v4h-4zM256 4h4v4h-4zM36 8h4v4h-4zM108 8h4v4h-4zM116 8h4v4h-4zM256 8h4v4h-4zM260 8h4v4h-4zM108 12h4v4h-4z"/><path fill="#7e7e7e" d="M12 8h4v4h-4zM52 8h4v4h-4zM84 8h4v4h-4zM96 8h4v4h-4zM132 8h4v4h-4zM156 8h4v4h-4zM204 8h4v4h-4zM208 8h4v4h-4zM216 8h4v4h-4zM236 8h4v4h-4zM280 8h4v4h-4z"/><path fill="#818181" d="M48 4h4v4h-4zM260 4h4v4h-4zM268 4h4v4h-4zM100 8h4v4h-4z"/><path fill="#848484" d="M52 4h4v4h-4zM252 4h4v4h-4zM264 4h4v4h-4zM28 8h4v4h-4zM136 8h4v4h-4zM200 8h4v4h-4zM244 8h4v4h-4zM272 8h4v4h-4zM244 12h4v4h-4z"/><path fill="#878787" d="M24 4h4v4h-4zM8 8h4v4h-4z"/><path fill="#8a8a8a" d="M72 4h4v4h-4zM184 4h4v4h-4z"/><path fill="#8d8d8d" d="M8 4h4v4h-4zM168 8h4v4h-4z"/><path fill="#909090" d="M224 8h4v4h-4z"/><path fill="#939393" d="M116 4h4v4h-4zM72 8h4v4h-4zM172 8h4v4h-4zM188 8h4v4h-4z"/><path fill="#969696" d="M92 8h4v4h-4z"/><path fill="#999999" d="M200 12h4v4h-4z"/><path fill="#9c9c9c" d="M172 4h4v4h-4z"/><path fill="#9f9f9f" d="M184 8h4v4h-4z"/><path fill="#aeaeae" d="M148 8h4v4h-4z"/></svg>
<svg style="left:1052px;top:540px" width="84" height="16" viewBox="0 0 84 16" shape-rendering="crispEdges"><path fill="#1b1b1b" d="M76 0h4v4h-4z"/><path fill="#242424" d="M0 0h4v4h-4zM4 0h4v4h-4zM28 0h4v4h-4zM32 0h4v4h-4zM64 0h4v4h-4zM40 12h4v4h-4z"/><path fill="#272727" d="M80 0h4v4h-4z"/><path fill="#2a2a2a" d="M36 12h4v4h-4z"/><path fill="#2d2d2d" d="M44 0h4v4h-4z"/><path fill="#333333" d="M48 0h4v4h-4z"/><path fill="#363636" d="M44 8h4v4h-4z"/><path fill="#393939" d="M0 8h4v4h-4zM28 8h4v4h-4z"/><path fill="#424242" d="M20 8h4v4h-4z"/><path fill="#454545" d="M0 4h4v4h-4zM4 8h4v4h-4z"/><path fill="#484848" d="M56 4h4v4h-4zM72 4h4v4h-4z"/><path fill="#4b4b4b" d="M20 4h4v4h-4zM28 4h4v4h-4zM52 4h4v4h-4zM68 4h4v4h-4zM12 8h4v4h-4zM52 8h4v4h-4zM64 8h4v4h-4zM68 8h4v4h-4z"/><path fill="#4e4e4e" d="M12 4h4v4h-4zM40 4h4v4h-4zM48 4h4v4h-4zM24 8h4v4h-4z"/><path fill="#515151" d="M36 4h4v4h-4zM16 8h4v4h-4zM56 8h4v4h-4zM72 8h4v4h-4z"/><path fill="#545454" d="M8 4h4v4h-4zM36 8h4v4h-4zM48 8h4v4h-4zM80 8h4v4h-4z"/><path fill="#575757" d="M8 8h4v4h-4z"/><path fill="#5a5a5a" d="M64 4h4v4h-4zM80 4h4v4h-4zM76 8h4v4h-4z"/><path fill="#5d5d5d" d="M60 4h4v4h-4z"/><path fill="#606060" d="M32 8h4v4h-4zM60 8h4v4h-4z"/><path fill="#636363" d="M44 4h4v4h-4zM76 4h4v4h-4z"/><path fill="#666666" d="M16 4h4v4h-4z"/><path fill="#6c6c6c" d="M4 4h4v4h-4zM40 8h4v4h-4z"/><path fill="#6f6f6f" d="M32 4h4v4h-4z"/><path fill="#727272" d="M24 4h4v4h-4z"/></svg>
<svg style="left:1052px;top:560px" width="212" height="12" viewBox="0 0 212 12" shape-rendering="crispEdges"><path fill="#1e1e1e" d="M16 8h4v4h-4z"/><path fill="#242424" d="M16 0h4v4h-4zM68 0h4v4h-4zM20 8h4v4h-4zM48 8h4v4h-4zM56 8h4v4h-4zM72 8h4v4h-4zM112 8h4v4h-4zM120 8h4v4h-4zM124 8h4v4h-4zM172 8h4v4h-4zM176 8h4v4h-4z"/><path fill="#272727" d="M172 0h4v4h-4zM84 8h4v4h-4zM180 8h4v4h-4zM204 8h4v4h-4zM208 8h4v4h-4z"/><path fill="#2a2a2a" d="M32 8h4v4h-4zM68 8h4v4h-4zM136 8h4v4h-4zM156 8h4v4h-4zM168 8h4v4h-4z"/><path fill="#2d2d2d" d="M0 0h4v4h-4zM44 0h4v4h-4zM168 0h4v4h-4zM0 8h4v4h-4zM44 8h4v4h-4zM100 8h4v4h-4z"/><path fill="#303030" d="M64 0h4v4h-4zM108 0h4v4h-4zM188 0h4v4h-4zM208 0h4v4h-4zM4 8h4v4h-4zM80 8h4v4h-4zM96 8h4v4h-4zM108 8h4v4h-4zM116 8h4v4h-4zM152 8h4v4h-4z"/><path fill="#333333" d="M88 0h4v4h-4zM156 0h4v4h-4zM8 8h4v4h-4zM52 8h4v4h-4zM64 8h4v4h-4zM104 8h4v4h-4zM128 8h4v4h-4zM144 8h4v4h-4zM160 8h4v4h-4zM188 8h4v4h-4z"/><path fill="#363636" d="M24 0h4v4h-4zM128 0h4v4h-4zM148 0h4v4h-4zM192 0h4v4h-4zM24 8h4v4h-4zM28 8h4v4h-4zM36 8h4v4h-4zM60 8h4v4h-4zM88 8h4v4h-4zM140 8h4v4h-4zM148 8h4v4h-4zM164 8h4v4h-4zM196 8h4v4h-4z"/><path fill="#393939" d="M48 0h4v4h-4zM88 4h4v4h-4zM12 8h4v4h-4zM132 8h4v4h-4zM184 8h4v4h-4zM192 8h4v4h-4z"/><path fill="#3c3c3c" d="M4 0h4v4h-4zM96 0h4v4h-4zM112 0h4v4h-4zM76 8h4v4h-4zM200 8h4v4h-4z"/><path fill="#3f3f3f" d="M196 4h4v4h-4zM92 8h4v4h-4z"/><path fill="#424242" d="M32 0h4v4h-4zM84 0h4v4h-4zM132 0h4v4h-4zM204 0h4v4h-4zM40 8h4v4h-4z"/><path fill="#454545" d="M52 0h4v4h-4zM80 0h4v4h-4zM0 4h4v4h-4zM116 4h4v4h-4z"/><path fill="#484848" d="M116 0h4v4h-4zM144 0h4v4h-4zM152 0h4v4h-4zM64 4h4v4h-4zM144 4h4v4h-4zM188 4h4v4h-4zM208 4h4v4h-4z"/><path fill="#4b4b4b" d="M28 0h4v4h-4zM36 0h4v4h-4zM104 0h4v4h-4zM136 0h4v4h-4zM196 0h4v4h-4zM8 4h4v4h-4z"/><path fill="#4e4e4e" d="M8 0h4v4h-4zM20 0h4v4h-4zM160 0h4v4h-4zM92 4h4v4h-4zM96 4h4v4h-4z"/><path fill="#515151" d="M12 0h4v4h-4zM72 0h4v4h-4zM92 0h4v4h-4zM100 0h4v4h-4zM120 0h4v4h-4zM176 0h4v4h-4zM12 4h4v4h-4zM24 4h4v4h-4zM36 4h4v4h-4zM40 4h4v4h-4zM60 4h4v4h-4zM148 4h4v4h-4z"/><path fill="#545454" d="M60 0h4v4h-4zM76 0h4v4h-4zM124 0h4v4h-4zM200 0h4v4h-4zM136 4h4v4h-4zM140 4h4v4h-4z"/><path fill="#575757" d="M44 4h4v4h-4z"/><path fill="#5a5a5a" d="M184 0h4v4h-4zM164 4h4v4h-4z"/><path fill="#5d5d5d" d="M40 0h4v4h-4zM164 0h4v4h-4zM28 4h4v4h-4zM52 4h4v4h-4zM108 4h4v4h-4zM152 4h4v4h-4zM160 4h4v4h-4zM172 4h4v4h-4zM192 4h4v4h-4z"/><path fill="#606060" d="M180 4h4v4h-4z"/><path fill="#636363" d="M56 0h4v4h-4zM140 0h4v4h-4zM180 0h4v4h-4zM72 4h4v4h-4zM128 4h4v4h-4z"/><path fill="#666666" d="M76 4h4v4h-4zM104 4h4v4h-4zM168 4h4v4h-4zM200 4h4v4h-4z"/><path fill="#696969" d="M20 4h4v4h-4zM48 4h4v4h-4zM56 4h4v4h-4zM112 4h4v4h-4zM120 4h4v4h-4zM124 4h4v4h-4z"/><path fill="#6c6c6c" d="M80 4h4v4h-4zM100 4h4v4h-4zM132 4h4v4h-4zM184 4h4v4h-4z"/><path fill="#6f6f6f" d="M84 4h4v4h-4zM176 4h4v4h-4zM204 4h4v4h-4z"/><path fill="#727272" d="M16 4h4v4h-4zM32 4h4v4h-4zM156 4h4v4h-4z"/><path fill="#757575" d="M68 4h4v4h-4z"/><path fill="#7b7b7b" d="M4 4h4v4h-4z"/></svg>
<!-- PREFS -->
<div id="prefs">
<div class="t" style="left:46.2px;top:20px;font-weight:bold;color:#eee">Torrents</div>
<div class="t" style="left:108.5px;top:20px;">Speed</div>
<div class="t" style="left:160px;top:20px;">Peers</div>
<div class="t" style="left:208.3px;top:20px;">Network</div>
<div class="abs" style="left:36px;top:38px;width:60px;height:2px;background:#d91f2b"></div>
<svg style="left:311px;top:20px" width="9" height="9" viewBox="0 0 9 9"><path d="M1 1 L8 8 M8 1 L1 8" stroke="#a4a4a4" stroke-width="2.600" fill="none"/></svg>
<div class="h" style="top:64px">Downloading</div>
<div class="t" style="left:39.4px;top:89px;">Download to:</div>
<div class="inp" style="top:88px;line-height:22px"></div>
<div class="cb" style="left:39px;top:118px"><svg style="left:0;top:0" width="10" height="10" viewBox="0 0 10 10"><path d="M2 4.700 L4.100 7 L7.900 2.100" fill="none" stroke="#333" stroke-width="1.800"/></svg></div>
<div class="t" style="left:54.7px;top:120px;">Start when added</div>
<div class="cb" style="left:39px;top:138px"><svg style="left:0;top:0" width="10" height="10" viewBox="0 0 10 10"><path d="M2 4.700 L4.100 7 L7.900 2.100" fill="none" stroke="#333" stroke-width="1.800"/></svg></div>
<div class="t" style="left:54.7px;top:140px;">Append ".part" to incomplete files' names</div>
<div class="h" style="top:167px">Seeding</div>
<div class="cb" style="left:39px;top:194px"><svg style="left:0;top:0" width="10" height="10" viewBox="0 0 10 10"><path d="M2 4.700 L4.100 7 L7.900 2.100" fill="none" stroke="#333" stroke-width="1.800"/></svg></div>
<div class="t" style="left:53px;top:195px;">Stop seeding at ratio:</div>
<div class="inp" style="top:191px;line-height:22px">2</div>
<div class="cb" style="left:39px;top:226px"></div>
<div class="t" style="left:53px;top:228px;">Stop seeding if idle for (min):</div>
<div class="inp" style="top:242px">30</div>
</div>
<svg style="left:693px;top:345px" width="84" height="12" viewBox="0 0 84 12" shape-rendering="crispEdges"><path fill="#3c3c3c" d="M27 0h3v3h-3z"/><path fill="#3f3f3f" d="M36 0h3v3h-3zM36 9h3v3h-3z"/><path fill="#424242" d="M51 0h3v3h-3zM54 3h3v3h-3z"/><path fill="#454545" d="M72 0h3v3h-3z"/><path fill="#484848" d="M21 0h3v3h-3z"/><path fill="#4b4b4b" d="M0 0h3v3h-3zM9 0h3v3h-3zM60 0h3v3h-3z"/><path fill="#4e4e4e" d="M12 0h3v3h-3zM57 0h3v3h-3zM45 3h3v3h-3z"/><path fill="#545454" d="M0 6h3v3h-3zM30 6h3v3h-3zM39 9h3v3h-3z"/><path fill="#575757" d="M6 0h3v3h-3zM15 0h3v3h-3zM54 0h3v3h-3zM66 0h3v3h-3zM33 3h3v3h-3zM3 6h3v3h-3zM6 6h3v3h-3zM15 6h3v3h-3zM18 6h3v3h-3zM63 6h3v3h-3z"/><path fill="#5a5a5a" d="M18 0h3v3h-3zM24 0h3v3h-3zM42 0h3v3h-3zM63 0h3v3h-3zM69 0h3v3h-3zM75 0h3v3h-3zM9 6h3v3h-3zM21 6h3v3h-3zM42 6h3v3h-3zM45 6h3v3h-3zM51 6h3v3h-3zM66 6h3v3h-3z"/><path fill="#5d5d5d" d="M33 0h3v3h-3zM81 0h3v3h-3zM12 6h3v3h-3zM81 6h3v3h-3z"/><path fill="#606060" d="M39 0h3v3h-3zM69 3h3v3h-3z"/><path fill="#636363" d="M57 3h3v3h-3zM72 3h3v3h-3zM36 6h3v3h-3zM57 6h3v3h-3z"/><path fill="#666666" d="M48 0h3v3h-3zM0 3h3v3h-3zM39 3h3v3h-3zM81 3h3v3h-3zM24 6h3v3h-3zM27 6h3v3h-3zM54 6h3v3h-3z"/><path fill="#696969" d="M6 3h3v3h-3zM33 6h3v3h-3zM72 6h3v3h-3zM78 6h3v3h-3z"/><path fill="#6c6c6c" d="M78 0h3v3h-3zM9 3h3v3h-3zM12 3h3v3h-3zM78 3h3v3h-3zM69 6h3v3h-3z"/><path fill="#6f6f6f" d="M3 3h3v3h-3zM15 3h3v3h-3zM18 3h3v3h-3zM42 3h3v3h-3zM63 3h3v3h-3zM48 6h3v3h-3zM60 6h3v3h-3zM75 6h3v3h-3z"/><path fill="#727272" d="M60 3h3v3h-3z"/><path fill="#757575" d="M27 3h3v3h-3zM48 3h3v3h-3z"/><path fill="#787878" d="M45 0h3v3h-3zM21 3h3v3h-3zM66 3h3v3h-3z"/><path fill="#7e7e7e" d="M24 3h3v3h-3zM30 3h3v3h-3zM51 3h3v3h-3zM75 3h3v3h-3zM39 6h3v3h-3z"/><path fill="#8a8a8a" d="M3 0h3v3h-3zM36 3h3v3h-3z"/><path fill="#969696" d="M30 0h3v3h-3z"/></svg>
<!-- MENUS -->
<div class="menu" style="left:4px;top:543px;width:137px;height:195px">
<div class="mi" style="left:17px;top:6px">About</div>
<div class="mi" style="left:17px;top:38px">Transmission Homepage</div>
<div class="mi" style="left:17px;top:60px">Transmission Tip Jar</div>
<div class="mi" style="left:17px;top:92px">Statistics</div>
<div class="mi" style="left:17px;top:123px">Total Download Rate</div>
<div class="mi" style="left:17px;top:145px">Total Upload Rate</div>
<div class="mi" style="left:17px;top:177px">Sort Transfers By</div>
<div class="sep" style="top:28px"></div>
<div class="sep" style="top:81px"></div>
<div class="sep" style="top:113px"></div>
<div class="sep" style="top:166px"></div>
<svg style="left:127.500px;top:125px" width="5" height="8" viewBox="0 0 5 8"><path d="M1 .8 L4 4 L1 7.200" fill="none" stroke="#484848" stroke-width="1"/></svg>
<svg style="left:127.500px;top:147px" width="5" height="8" viewBox="0 0 5 8"><path d="M1 .8 L4 4 L1 7.200" fill="none" stroke="#484848" stroke-width="1"/></svg>
<svg style="left:127.500px;top:179px" width="5" height="8" viewBox="0 0 5 8"><path d="M1 .8 L4 4 L1 7.200" fill="none" stroke="#484848" stroke-width="1"/></svg>
</div>
<div class="menu" style="left:141px;top:530px;width:113px;height:208px">
<div class="mi" style="left:17px;top:6px">Queue Order</div>
<div class="mi" style="left:17px;top:28px">Activity</div>
<div class="mi" style="left:17px;top:50px">Age</div>
<div class="mi" style="left:17px;top:72px">Name</div>
<div class="mi" style="left:17px;top:94px">Progress</div>
<div class="mi" style="left:17px;top:115px">Ratio</div>
<div class="mi" style="left:17px;top:137px">Size</div>
<div class="mi" style="left:17px;top:159px">State</div>
<div class="mi" style="left:17px;top:191px">Reverse Sort Order</div>
<div class="sep" style="top:180px"></div>
<div class="abs" style="left:6.700px;top:74.500px;width:6px;height:6px;border-radius:3px;background:#5a5a5a"></div>
</div>
</div>
</body>
</div>
</body>
</div>
</body>
</html>
